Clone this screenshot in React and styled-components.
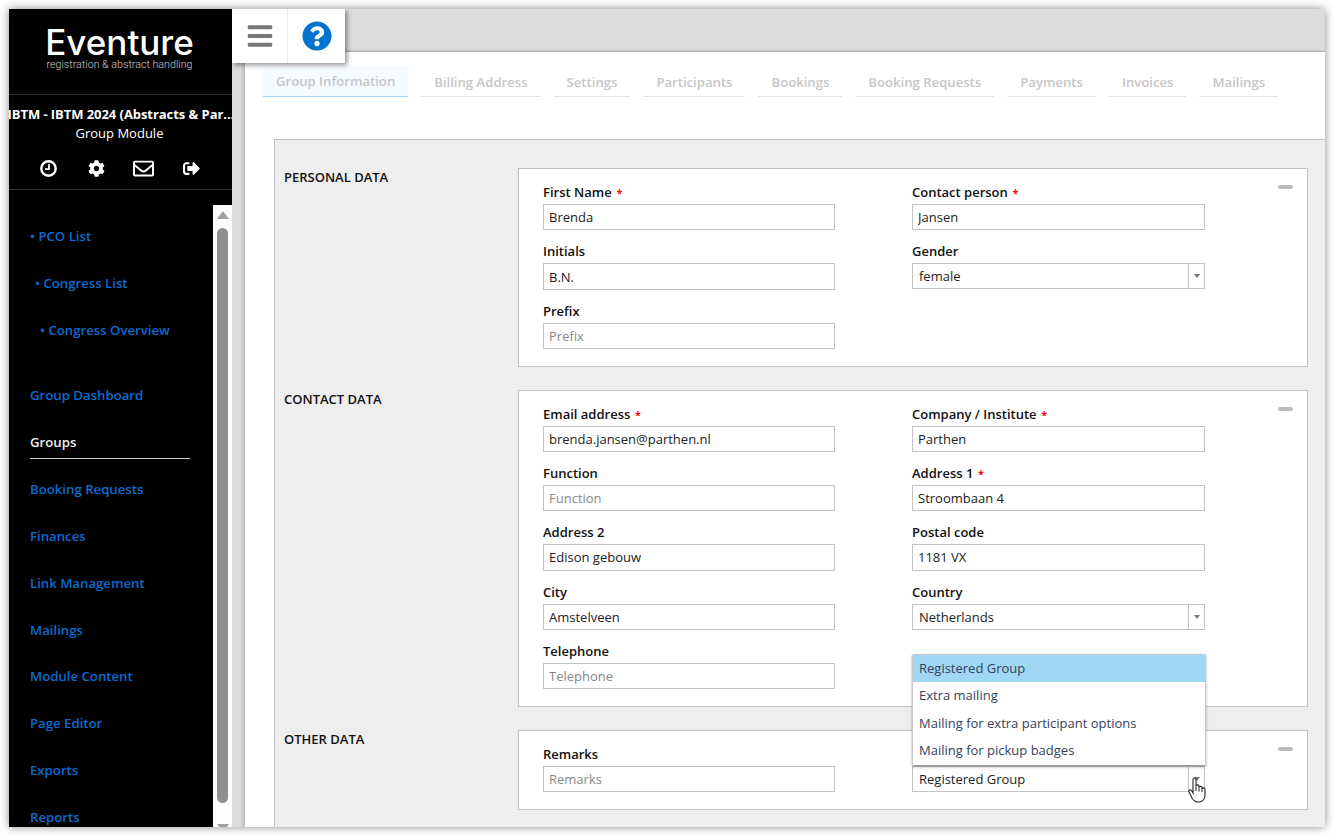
import React from 'react'
import styled, { createGlobalStyle } from 'styled-components'
import { FaBars, FaQuestionCircle, FaCog, FaRegEnvelope, FaSignOutAlt } from 'react-icons/fa'

const GlobalStyle = createGlobalStyle`
  html, body {
    margin: 0;
    padding: 0;
    background: #fff;
    overflow: hidden;
  }
  body {
    font-family: 'Open Sans', 'Liberation Sans', sans-serif;
    font-size: 13px;
    color: #222;
  }
  * {
    box-sizing: border-box;
  }
`

const Page = styled.div`
  width: 1333px;
  height: 835px;
  padding: 9px 8px 8px 9px;
`

const Frame = styled.div`
  position: relative;
  display: flex;
  width: 100%;
  height: 100%;
  overflow: hidden;
  background: #dcdcdc;
  box-shadow: 0 0 9px rgba(0, 0, 0, 0.45);
`

const Sidebar = styled.aside`
  display: flex;
  flex-direction: column;
  flex: 0 0 223px;
  width: 223px;
  min-width: 0;
  overflow: hidden;
  background: #000;
  color: #fff;
`

const Brand = styled.div`
  height: 86px;
  padding-top: 16px;
  display: flex;
  flex-direction: column;
  align-items: center;
  border-bottom: 1px solid #333;
`

const BrandName = styled.div`
  font-family: Inter, Roboto, 'Liberation Sans', sans-serif;
  font-size: 35px;
  line-height: 35px;
  font-weight: 500;
  margin-left: -2px;
`

const BrandSub = styled.div`
  font-family: Roboto, 'Liberation Sans', sans-serif;
  font-size: 10.7px;
  line-height: 9px;
  font-weight: 300;
  color: #ccc;
  margin-left: -2px;
`

const ModuleInfo = styled.div`
  height: 95px;
  padding-top: 10px;
  border-bottom: 1px solid #333;
  text-align: center;
`

const EventName = styled.div`
  font-weight: 700;
  line-height: 19px;
  letter-spacing: -0.06px;
  margin-left: -1.5px;
  white-space: nowrap;
  overflow: hidden;
`

const ModuleName = styled.div`
  line-height: 19px;
  padding-right: 2px;
`

const IconRow = styled.div`
  display: grid;
  grid-template-columns: repeat(4, 47.5px);
  justify-items: center;
  align-items: center;
  height: 20px;
  margin-top: 15px;
  padding-left: 16px;
  font-size: 17px;
  line-height: 0;
`

const MailIcon = styled(FaRegEnvelope)`
  font-size: 21px;
`

const NavArea = styled.div`
  flex: 1;
  display: flex;
  min-height: 0;
  margin-top: 15px;
`

const Nav = styled.nav`
  flex: 1;
  padding-top: 8px;
  overflow: hidden;
`

const NavItem = styled.a`
  position: relative;
  display: flex;
  align-items: center;
  height: 46.9px;
  margin-left: ${(p) => 21 + (p.$indent || 0)}px;
  width: 160px;
  font-size: 13.2px;
  font-weight: 600;
  white-space: nowrap;
  color: ${(p) => (p.$active ? '#eee' : '#0b6bd0')};
  margin-top: ${(p) => (p.$gap ? '18px' : '0')};

  ${(p) =>
    p.$active &&
    `
    &::after {
      content: '';
      position: absolute;
      left: 0;
      right: 0;
      bottom: 6px;
      height: 1px;
      background: #ccc;
    }
  `}
`

const ScrollTrack = styled.div`
  flex: 0 0 19px;
  display: flex;
  flex-direction: column;
  align-items: center;
  background: #fdfdfd;
`

const ScrollArrow = styled.div`
  flex: none;
  width: 0;
  height: 0;
  margin-top: ${(p) => p.$top}px;
  border-left: 6.5px solid transparent;
  border-right: 6.5px solid transparent;
  border-${(p) => (p.$down ? 'top' : 'bottom')}: 8px solid #a0a0a0;
`

const ScrollThumb = styled.div`
  flex: none;
  width: 11px;
  height: 575px;
  margin-top: 9px;
  border-radius: 6px;
  background: #8f8f8f;
`

const Main = styled.main`
  flex: 1;
  min-width: 0;
  display: flex;
  flex-direction: column;
`

const TopBar = styled.div`
  flex: 0 0 43px;
  background: #dcdcdc;
  box-shadow: inset 0 -2px 2px -1px rgba(0, 0, 0, 0.2);
`

const ToolBox = styled.div`
  position: absolute;
  top: 0;
  left: 223px;
  z-index: 3;
  display: flex;
  height: 54px;
  background: #fff;
  box-shadow: 2px 2px 5px rgba(0, 0, 0, 0.45);
`

const ToolButton = styled.div`
  display: flex;
  align-items: center;
  justify-content: center;
  width: ${(p) => p.$w}px;
  border-left: ${(p) => (p.$split ? '1px solid #f0f0f0' : 'none')};
  color: ${(p) => p.$color};
  font-size: ${(p) => p.$size}px;
`

const Content = styled.div`
  flex: 1;
  min-height: 0;
  margin-left: 13px;
  background: #fff;
  box-shadow: -2px 0 3px rgba(0, 0, 0, 0.18);
`

const Tabs = styled.div`
  display: flex;
  gap: 13px;
  height: 87px;
  padding: 14px 0 0 18px;
`

const Tab = styled.div`
  height: 31px;
  padding: ${(p) => (p.$active ? '5px' : '6px')} 13px 0;
  font-size: 13.14px;
  font-weight: 600;
  color: #c6c6c6;
  line-height: 20px;
  white-space: nowrap;
  background: ${(p) => (p.$active ? '#f6fbff' : 'transparent')};
  border-bottom: 1px solid ${(p) => (p.$active ? '#a8d8f5' : '#e6e6e6')};
`

const Panel = styled.div`
  margin-left: 29px;
  height: 100%;
  padding: 28px 17px 0 0;
  background: #eee;
  border-top: 1px solid #c2c2c2;
  border-left: 1px solid #c2c2c2;
`

const Section = styled.section`
  display: flex;
  margin-bottom: 23px;
`

const SectionTitle = styled.h2`
  flex: 0 0 243px;
  margin: 0;
  padding: 0 0 0 9px;
  font-size: 13px;
  line-height: 18px;
  font-weight: 600;
  color: #111;
`

const Card = styled.div`
  flex: 1;
  display: flex;
  justify-content: space-between;
  padding: 13px 14px 5.4px 24px;
  background: #fff;
  border: 1px solid #c2c2c2;
`

const Fields = styled.div`
  display: grid;
  grid-template-columns: 292px 293px;
  column-gap: 77px;
  grid-auto-rows: 59.4px;
`

const Field = styled.div`
  position: relative;
`

const Label = styled.div`
  height: 22px;
  line-height: 20px;
  font-weight: 600;
  color: #111;
`

const Required = styled.span`
  margin-left: 5px;
  font-size: 10px;
  color: #f00;
  font-weight: 700;
`

const Input = styled.input`
  display: block;
  width: 100%;
  height: 26.3px;
  padding: 0 5px;
  border: 1px solid #c4c4c4;
  border-radius: 0;
  outline: none;
  background: #fff;
  font: inherit;
  color: #222;

  &::placeholder {
    color: #888;
    opacity: 1;
  }
`

const SelectBox = styled.div`
  display: flex;
  height: 26px;
  border: 1px solid #c4c4c4;
  background: #fff;
`

const SelectValue = styled.div`
  flex: 1;
  padding: 0 6px;
  line-height: 25.5px;
`

const SelectArrow = styled.div`
  flex: 0 0 16px;
  display: flex;
  align-items: center;
  justify-content: center;
  border-left: 1px solid #c4c4c4;

  &::after {
    content: '';
    border-left: 3.5px solid transparent;
    border-right: 3.5px solid transparent;
    border-top: 4px solid #777;
  }
`

const Collapse = styled.div`
  width: 15px;
  height: 4px;
  margin-top: 3px;
  border-radius: 2px;
  background: #bbb;
`

const Dropdown = styled.ul`
  position: absolute;
  z-index: 2;
  left: 0;
  right: -1px;
  top: -90.2px;
  margin: 0;
  padding: 0;
  list-style: none;
  height: 112.2px;
  background: #fff;
  border: 1px solid #c8c8c8;
  border-bottom-color: #999;
  border-radius: 2px;
  box-shadow: 0 1px 3px rgba(0, 0, 0, 0.3);
`

const Option = styled.li`
  height: 27.4px;
  padding: 0 6px;
  line-height: 27.4px;
  color: #33415c;
  background: ${(p) => (p.$selected ? '#a0d8f3' : 'transparent')};
`

const Pointer = styled.svg`
  position: absolute;
  z-index: 4;
  right: -3px;
  top: 33px;
  width: 20px;
  height: 27px;
`

const ClockIcon = () => (
  <svg width="17" height="17" viewBox="0 0 17 17">
    <circle cx="8.500" cy="8.500" r="7.200" fill="none" stroke="currentColor" strokeWidth="2.400" />
    <path d="M9 4.200V9.200H5" fill="none" stroke="currentColor" strokeWidth="1.800" />
  </svg>
)

const FieldBlock = ({ label, required, value, placeholder }) => (
  <Field>
    <Label>
      {label}
      {required && <Required>*</Required>}
    </Label>
    <Input readOnly defaultValue={value} placeholder={placeholder} />
  </Field>
)

const SelectBlock = ({ label, value, children }) => (
  <Field>
    <Label>{label}</Label>
    <SelectBox>
      <SelectValue>{value}</SelectValue>
      <SelectArrow />
    </SelectBox>
    {children}
  </Field>
)

const upperLinks = [
  { label: '• PCO List', indent: 0 },
  { label: '• Congress List', indent: 5 },
  { label: '• Congress Overview', indent: 10 },
]

const menuLinks = [
  'Group Dashboard',
  'Groups',
  'Booking Requests',
  'Finances',
  'Link Management',
  'Mailings',
  'Module Content',
  'Page Editor',
  'Exports',
  'Reports',
]

const tabs = [
  'Group Information',
  'Billing Address',
  'Settings',
  'Participants',
  'Bookings',
  'Booking Requests',
  'Payments',
  'Invoices',
  'Mailings',
]

const mailings = [
  'Registered Group',
  'Extra mailing',
  'Mailing for extra participant options',
  'Mailing for pickup badges',
]

const App = () => (
  <Page>
    <GlobalStyle />
    <Frame>
      <Sidebar>
        <Brand>
          <BrandName>Eventure</BrandName>
          <BrandSub>registration &amp; abstract handling</BrandSub>
        </Brand>
        <ModuleInfo>
          <EventName>IBTM - IBTM 2024 (Abstracts &amp; Par...</EventName>
          <ModuleName>Group Module</ModuleName>
          <IconRow>
            <ClockIcon />
            <FaCog />
            <MailIcon />
            <FaSignOutAlt />
          </IconRow>
        </ModuleInfo>
        <NavArea>
          <Nav>
            {upperLinks.map((l) => (
              <NavItem key={l.label} $indent={l.indent}>
                {l.label}
              </NavItem>
            ))}
            {menuLinks.map((l, i) => (
              <NavItem key={l} $gap={i === 0} $active={l === 'Groups'}>
                {l}
              </NavItem>
            ))}
          </Nav>
          <ScrollTrack>
            <ScrollArrow $top={6} />
            <ScrollThumb />
            <ScrollArrow $top={21} $down />
          </ScrollTrack>
        </NavArea>
      </Sidebar>
      <ToolBox>
        <ToolButton $w={55} $color="#777" $size={28}>
          <FaBars />
        </ToolButton>
        <ToolButton $w={58} $split $color="#0073cf" $size={30}>
          <FaQuestionCircle />
        </ToolButton>
      </ToolBox>
      <Main>
        <TopBar />
        <Content>
          <Tabs>
            {tabs.map((t, i) => (
              <Tab key={t} $active={i === 0}>
                {t}
              </Tab>
            ))}
          </Tabs>
          <Panel>
            <Section>
              <SectionTitle>PERSONAL DATA</SectionTitle>
              <Card>
                <Fields>
                  <FieldBlock label="First Name" required value="Brenda" />
                  <FieldBlock label="Contact person" required value="Jansen" />
                  <FieldBlock label="Initials" value="B.N." />
                  <SelectBlock label="Gender" value="female" />
                  <FieldBlock label="Prefix" placeholder="Prefix" />
                </Fields>
                <Collapse />
              </Card>
            </Section>
            <Section>
              <SectionTitle>CONTACT DATA</SectionTitle>
              <Card>
                <Fields>
                  <FieldBlock label="Email address" required value="brenda.jansen@parthen.nl" />
                  <FieldBlock label="Company / Institute" required value="Parthen" />
                  <FieldBlock label="Function" placeholder="Function" />
                  <FieldBlock label="Address 1" required value="Stroombaan 4" />
                  <FieldBlock label="Address 2" value="Edison gebouw" />
                  <FieldBlock label="Postal code" value="1181 VX" />
                  <FieldBlock label="City" value="Amstelveen" />
                  <SelectBlock label="Country" value="Netherlands" />
                  <FieldBlock label="Telephone" placeholder="Telephone" />
                </Fields>
                <Collapse />
              </Card>
            </Section>
            <Section>
              <SectionTitle>OTHER DATA</SectionTitle>
              <Card>
                <Fields>
                  <FieldBlock label="Remarks" placeholder="Remarks" />
                  <SelectBlock label="" value="Registered Group">
                    <Dropdown>
                      {mailings.map((m, i) => (
                        <Option key={m} $selected={i === 0}>
                          {m}
                        </Option>
                      ))}
                    </Dropdown>
                    <Pointer viewBox="0 0 20 27">
                      <path
                        d="M5 2.500c0-2 3-2 3 0V9c0-1.500 3-1.500 3 0v1.500c0-1.500 3-1.500 3 0V12c0-1.500 3-1.500 3 0v6c0 4-2.500 7-6 7H9.500c-2.500 0-4-1.500-5.500-4L1 15c-1-2 1.500-3 2.500-1.500L5 16z"
                        fill="#fff"
                        stroke="#222"
                        strokeWidth="1.100"
                      />
                      <path d="M8 9v5M11 10.500v4M14 12v3" fill="none" stroke="#222" strokeWidth="1" />
                    </Pointer>
                  </SelectBlock>
                </Fields>
                <Collapse />
              </Card>
            </Section>
          </Panel>
        </Content>
      </Main>
    </Frame>
  </Page>
)

export default App
